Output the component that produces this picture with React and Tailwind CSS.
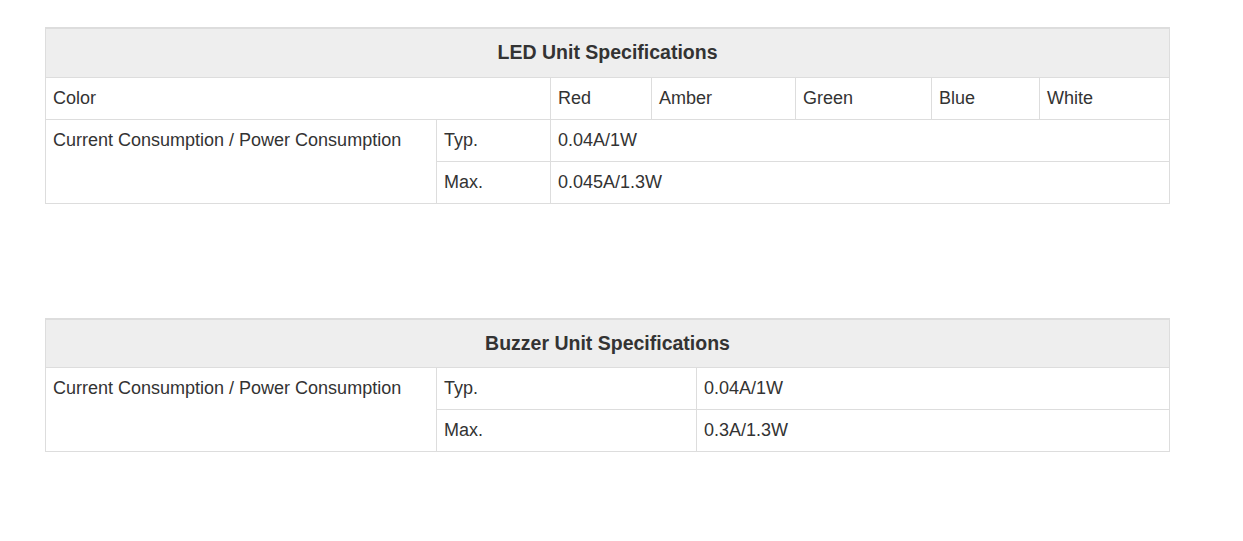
const ledColors = ["Red", "Amber", "Green", "Blue", "White"];

const cell = "border border-[#ddd] pl-[7px] pr-2 py-2 align-top text-left font-normal leading-[25px]";

const SpecHeader = ({ title, span }) => (
  <thead>
    <tr>
      <th
        colSpan={span}
        className="border border-[#ddd] border-t-2 bg-[#eee] h-[49px] px-2 text-center align-middle text-[19.5px] font-bold text-[#333]"
      >
        {title}
      </th>
    </tr>
  </thead>
);

const LedTable = () => (
  <table className="w-[1124px] table-fixed border-collapse">
    <colgroup>
      <col className="w-[391px]" />
      <col className="w-[114px]" />
      <col className="w-[101px]" />
      <col className="w-[144px]" />
      <col className="w-[136px]" />
      <col className="w-[108px]" />
      <col className="w-[130px]" />
    </colgroup>
    <SpecHeader title="LED Unit Specifications" span={7} />
    <tbody>
      <tr>
        <td colSpan={2} className={cell}>Color</td>
        {ledColors.map((c) => (
          <td key={c} className={cell}>{c}</td>
        ))}
      </tr>
      <tr>
        <td rowSpan={2} className={cell}>Current Consumption / Power Consumption</td>
        <td className={cell}>Typ.</td>
        <td colSpan={5} className={cell}>0.04A/1W</td>
      </tr>
      <tr>
        <td className={cell}>Max.</td>
        <td colSpan={5} className={cell}>0.045A/1.3W</td>
      </tr>
    </tbody>
  </table>
);

const BuzzerTable = () => (
  <table className="w-[1124px] table-fixed border-collapse">
    <colgroup>
      <col className="w-[391px]" />
      <col className="w-[260px]" />
      <col className="w-[473px]" />
    </colgroup>
    <SpecHeader title="Buzzer Unit Specifications" span={3} />
    <tbody>
      <tr>
        <td rowSpan={2} className={cell}>Current Consumption / Power Consumption</td>
        <td className={cell}>Typ.</td>
        <td className={cell}>0.04A/1W</td>
      </tr>
      <tr>
        <td className={cell}>Max.</td>
        <td className={cell}>0.3A/1.3W</td>
      </tr>
    </tbody>
  </table>
);

export default function App() {
  return (
    <div
      className="min-h-[541px] bg-white pl-[45px] pt-[27px] text-[18px] text-[#333]"
      style={{ fontFamily: '"Liberation Sans", Arial, sans-serif' }}
    >
      <div className="flex flex-col gap-[114px]">
        <LedTable />
        <BuzzerTable />
      </div>
    </div>
  );
}
